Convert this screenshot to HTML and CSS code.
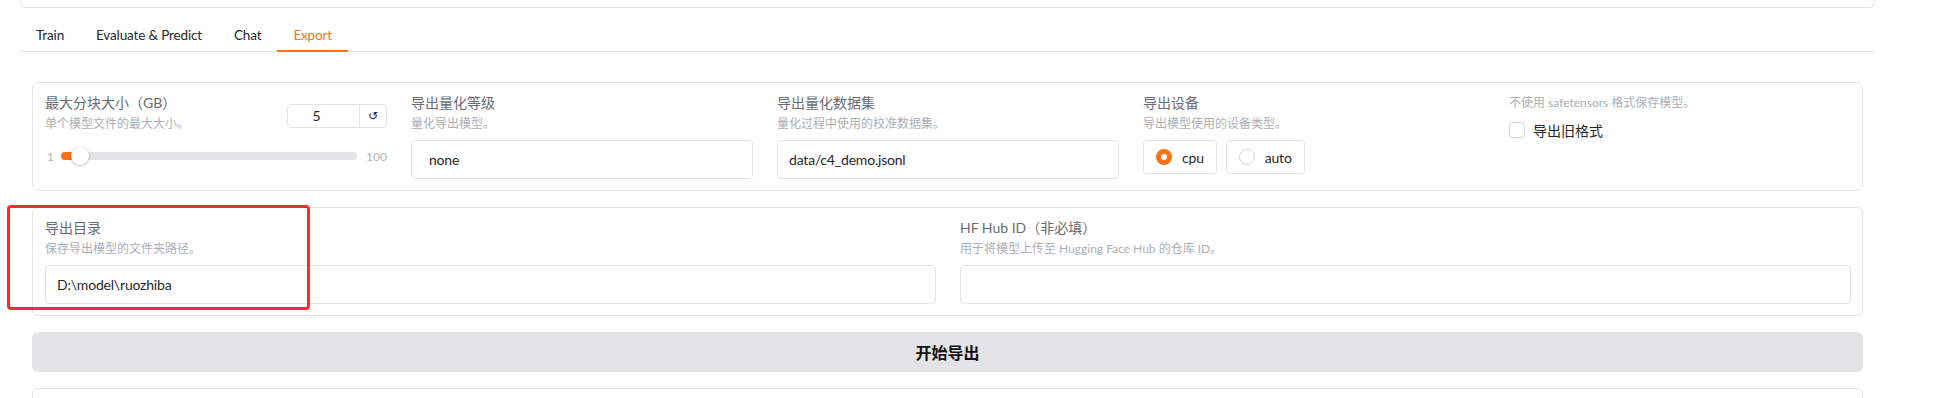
FILE: index.html
```html
<!DOCTYPE html>
<html lang="zh">
<head>
<meta charset="utf-8">
<title>Export</title>
<link rel="stylesheet" href="styles.css">
</head>
<body>
<div class="app">
  <div class="topbox"></div>
  <div class="tabs">
    <div class="tab-nav">
      <button class="tab">Train</button>
      <button class="tab">Evaluate &amp; Predict</button>
      <button class="tab">Chat</button>
      <button class="tab selected">Export</button>
    </div>
    <div class="tab-content">
      <div class="panel row5">
        <div class="block">
          <div class="slider-head">
            <div>
              <span class="label">最大分块大小（GB）</span>
              <span class="info">单个模型文件的最大大小。</span>
            </div>
            <div class="numbox"><span class="num">5</span><span class="reset">↺</span></div>
          </div>
          <div class="slider-row">
            <span class="minmax min">1</span>
            <div class="track"><div class="fill" style="width:20px"></div><div class="thumb" style="left:10px"></div></div>
            <span class="minmax max">100</span>
          </div>
        </div>
        <div class="block">
          <span class="label">导出量化等级</span>
          <span class="info">量化导出模型。</span>
          <div class="input dropdown">none</div>
        </div>
        <div class="block">
          <span class="label">导出量化数据集</span>
          <span class="info">量化过程中使用的校准数据集。</span>
          <div class="input">data/c4_demo.jsonl</div>
        </div>
        <div class="block">
          <span class="label">导出设备</span>
          <span class="info">导出模型使用的设备类型。</span>
          <div class="radios">
            <label class="radio"><span class="dot on"></span>cpu</label>
            <label class="radio"><span class="dot"></span>auto</label>
          </div>
        </div>
        <div class="block">
          <span class="info top">不使用 safetensors 格式保存模型。</span>
          <label class="check"><span class="box"></span>导出旧格式</label>
        </div>
      </div>

      <div class="panel row2">
        <div class="block">
          <span class="label">导出目录</span>
          <span class="info">保存导出模型的文件夹路径。</span>
          <div class="input">D:\model\ruozhiba</div>
        </div>
        <div class="block">
          <span class="label">HF Hub ID（非必填）</span>
          <span class="info">用于将模型上传至 Hugging Face Hub 的仓库 ID。</span>
          <div class="input"></div>
        </div>
      </div>

      <button class="btn">开始导出</button>

      <div class="panel next"></div>
    </div>
  </div>
</div>
<div class="annot"></div>
</body>
</html>
```

FILE: styles.css
```css
* { box-sizing: border-box; }

body {
  margin: 0;
  background: #ffffff;
  font-family: Lato, "Noto Sans CJK SC", sans-serif;
  color: #27272a;
  overflow: hidden;
}

.app {
  width: 1855px;
  margin-left: 20px;
}

.topbox {
  height: 8px;
  border: 1px solid #e4e4e7;
  border-top: none;
  border-radius: 0 0 6px 6px;
}

.tab-nav {
  margin-top: 13px;
  height: 31px;
  display: flex;
  border-bottom: 1px solid #e4e4e7;
}

.tab {
  position: relative;
  height: 30px;
  padding: 0 16px 2px;
  border: none;
  background: none;
  font-family: inherit;
  font-size: 13.5px;
  letter-spacing: -0.15px;
  color: #27272a;
}

.tab.selected { color: #f97316; }

.tab.selected::after {
  content: "";
  position: absolute;
  left: 0;
  right: 0;
  bottom: -1px;
  height: 2px;
  background: #f97316;
}

.tab-content {
  padding: 30px 12px 0;
}

.panel {
  border: 1px solid #e4e4e7;
  border-radius: 6px;
  padding: 10px 12px 11px;
}

.row5 {
  display: grid;
  grid-template-columns: repeat(5, 342px);
  column-gap: 24px;
}

.row2 {
  margin-top: 16px;
  display: grid;
  grid-template-columns: repeat(2, 891px);
  column-gap: 24px;
}

.label {
  display: block;
  font-size: 14px;
  line-height: 20px;
  color: #6b6b73;
}

.info {
  display: block;
  margin-top: 2px;
  font-size: 12px;
  line-height: 18px;
  color: #aeaeb6;
}

.info.top {
  margin-top: 0;
  line-height: 20px;
}

.input {
  margin-top: 7px;
  height: 39px;
  border: 1px solid #e4e4e7;
  border-radius: 4px;
  padding: 0 11px;
  display: flex;
  align-items: center;
  font-size: 14px;
  letter-spacing: -0.2px;
  color: #27272a;
}

.input.dropdown { padding-left: 17px; }

/* slider */
.slider-head {
  display: flex;
  justify-content: space-between;
}

.numbox {
  margin-top: 11px;
  width: 100px;
  height: 24px;
  border: 1px solid #e4e4e7;
  border-radius: 4px;
  display: flex;
}

.num {
  flex: 1;
  text-align: center;
  padding-right: 14px;
  font-size: 14px;
  line-height: 22px;
  color: #27272a;
}

.reset {
  width: 27px;
  border-left: 1px solid #e4e4e7;
  text-align: center;
  font-family: "DejaVu Sans", sans-serif;
  font-size: 12px;
  line-height: 22px;
  color: #27272a;
}

.slider-row {
  margin-top: 13px;
  height: 20px;
  display: flex;
  align-items: center;
}

.minmax {
  font-size: 12px;
  color: #b4b4bb;
}

.min { width: 16px; padding-left: 2px; }
.max { width: 30px; text-align: right; }

.track {
  position: relative;
  flex: 1;
  height: 8px;
  border-radius: 4px;
  background: #e4e4e7;
}

.fill {
  height: 100%;
  border-radius: 4px;
  background: #f97316;
}

.thumb {
  position: absolute;
  top: 50%;
  width: 18px;
  height: 18px;
  margin-top: -9px;
  border-radius: 50%;
  background: #ffffff;
  box-shadow: 0 1px 3px rgba(0, 0, 0, 0.22), 0 0 0 1px rgba(0, 0, 0, 0.04);
}

/* radios */
.radios {
  margin-top: 7px;
  display: flex;
  gap: 9px;
}

.radio {
  height: 34px;
  padding: 0 12px;
  border: 1px solid #e4e4e7;
  border-radius: 4px;
  display: flex;
  align-items: center;
  gap: 10px;
  font-size: 14px;
  letter-spacing: -0.2px;
  color: #27272a;
}

.dot {
  width: 16px;
  height: 16px;
  border-radius: 50%;
  border: 1px solid #d4d4d8;
  background: #ffffff;
}

.dot.on {
  border: 5px solid #f97316;
}

/* checkbox */
.check {
  margin-top: 9px;
  height: 16px;
  display: flex;
  align-items: center;
  gap: 8px;
  font-size: 14px;
  color: #27272a;
}

.box {
  width: 16px;
  height: 16px;
  border: 1px solid #d4d4d8;
  border-radius: 4px;
}

/* button */
.btn {
  display: block;
  width: 100%;
  margin-top: 16px;
  height: 40px;
  border: none;
  border-radius: 6px;
  background: #e4e4e7;
  font-family: inherit;
  font-size: 16px;
  font-weight: 700;
  color: #111111;
}

.panel.next {
  margin-top: 16px;
  height: 10px;
  padding: 0;
  border-bottom: none;
  border-radius: 6px 6px 0 0;
}

/* red annotation rectangle drawn over the screenshot */
.annot {
  position: absolute;
  left: 7px;
  top: 205px;
  width: 303px;
  height: 105px;
  border: 3px solid #ff2a2a;
  border-radius: 4px;
}
```
